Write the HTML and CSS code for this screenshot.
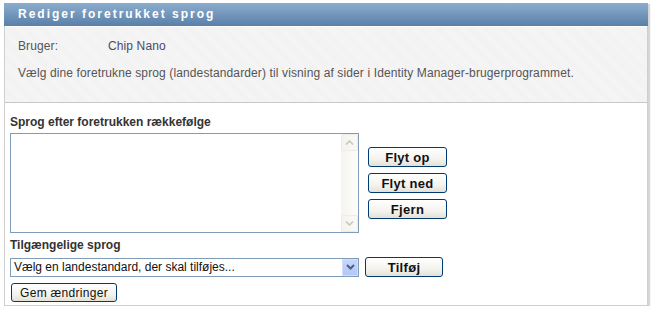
FILE: index.html
```html
<!DOCTYPE html>
<html lang="da">
<head>
    <meta charset="UTF-8">
    <title>Rediger foretrukket sprog</title>
    <link rel="stylesheet" href="styles.css">
</head>
<body>
    <div class="panel">
        <div class="panel-header">Rediger foretrukket sprog</div>

        <div class="info">
            <div class="user-row">
                <span class="user-label">Bruger:</span>
                <span class="user-name">Chip Nano</span>
            </div>
            <p class="intro">Vælg dine foretrukne sprog (landestandarder) til visning af sider i Identity Manager-brugerprogrammet.</p>
        </div>

        <div class="content">
            <div class="field-label">Sprog efter foretrukken rækkefølge</div>
            <div class="list-row">
                <div class="listbox">
                    <div class="scrollbar">
                        <span class="scroll-btn">
                            <svg width="9" height="5" viewBox="0 0 9 5"><path d="M1 4.5 L4.5 1 L8 4.5" fill="none" stroke="#c9c7ba" stroke-width="1.6"/></svg>
                        </span>
                        <span class="scroll-track"></span>
                        <span class="scroll-btn">
                            <svg width="9" height="5" viewBox="0 0 9 5"><path d="M1 0.5 L4.5 4 L8 0.5" fill="none" stroke="#c9c7ba" stroke-width="1.6"/></svg>
                        </span>
                    </div>
                </div>
                <div class="list-actions">
                    <button class="btn btn-bold">Flyt op</button>
                    <button class="btn btn-bold">Flyt ned</button>
                    <button class="btn btn-bold">Fjern</button>
                </div>
            </div>

            <div class="field-label second">Tilgængelige sprog</div>
            <div class="select-row">
                <div class="select">
                    <span class="select-text">Vælg en landestandard, der skal tilføjes...</span>
                    <span class="select-arrow">
                        <svg width="9" height="6" viewBox="0 0 9 6"><path d="M1 1 L4.5 4.5 L8 1" fill="none" stroke="#4d6185" stroke-width="2"/></svg>
                    </span>
                </div>
                <button class="btn btn-bold btn-add">Tilføj</button>
            </div>

            <button class="btn btn-save">Gem ændringer</button>
        </div>
    </div>
</body>
</html>
```

FILE: styles.css
```css
* {
    margin: 0;
    padding: 0;
    box-sizing: border-box;
}

body {
    font-family: "Liberation Sans", Arial, sans-serif;
    background: white;
    padding: 3px 4px 0 4px;
}

.panel {
    width: 644px;
    border: 1px solid #cfcfcf;
    border-top: none;
    box-shadow: 2px 1px 1px #d6d6d6;
}

.panel-header {
    height: 23px;
    margin: 0 -1px;
    padding-left: 14px;
    line-height: 23px;
    background: linear-gradient(#8badce, #5a80a8);
    color: white;
    font-size: 12px;
    font-weight: bold;
    letter-spacing: 2px;
}

.info {
    height: 76px;
    margin-top: 1px;
    padding: 12px 13px 0 13px;
    background: repeating-linear-gradient(45deg, #f6f6f6 0, #f6f6f6 1px, #f1f1f1 1px, #f1f1f1 2px);
    border-bottom: 1px solid #c8c8c8;
    color: #555;
    font-size: 12px;
    line-height: 14px;
    letter-spacing: 0.12px;
}

.user-row {
    display: flex;
}

.user-label {
    width: 90px;
}

.user-name {
    color: #4c4a66;
}

.intro {
    margin-top: 13px;
}

.content {
    padding: 0 5px 3px 5px;
}

.field-label {
    margin-top: 12px;
    height: 18px;
    color: #333;
    font-size: 12px;
    font-weight: bold;
    line-height: 14px;
}

.field-label.second {
    margin-top: 5px;
    height: 19px;
}

.list-row {
    display: flex;
    align-items: center;
    gap: 9px;
}

.listbox {
    width: 349px;
    height: 100px;
    border: 1px solid #7f9db9;
    background: white;
    display: flex;
    justify-content: flex-end;
}

.scrollbar {
    width: 17px;
    display: flex;
    flex-direction: column;
    background: linear-gradient(90deg, #f5f4ef, #fdfdfa);
}

.scroll-btn {
    height: 17px;
    display: flex;
    align-items: center;
    justify-content: center;
    border: 1px solid #eeede5;
    border-radius: 2px;
    background: linear-gradient(90deg, #f4f3ee, #faf9f5);
}

.scroll-track {
    flex: 1;
}

.list-actions {
    display: flex;
    flex-direction: column;
    gap: 6px;
}

.btn {
    font-family: "Liberation Sans", Arial, sans-serif;
    color: #111;
    border: 1px solid #003c74;
    border-radius: 3px;
    background: linear-gradient(#ffffff 0%, #f4f3ee 60%, #e3e1d6 100%);
    cursor: pointer;
}

.btn-bold {
    width: 79px;
    height: 20px;
    font-size: 13px;
    font-weight: bold;
    letter-spacing: 0.3px;
}

.select-row {
    display: flex;
    align-items: center;
    gap: 6px;
}

.select {
    width: 349px;
    height: 19px;
    border: 1px solid #7f9db9;
    display: flex;
    align-items: center;
    justify-content: space-between;
    background: white;
}

.select-text {
    padding-left: 3px;
    font-size: 12px;
    color: #111;
}

.select-arrow {
    width: 16px;
    height: 17px;
    display: flex;
    align-items: center;
    justify-content: center;
    background: linear-gradient(#c6d6fc, #b4c8f5);
    border: 1px solid #d2ddf8;
}

.btn-add {
    width: 78px;
}

.btn-save {
    margin-top: 6px;
    margin-left: 1px;
    width: 106px;
    height: 19px;
    font-size: 12px;
    letter-spacing: 0.3px;
}
```
